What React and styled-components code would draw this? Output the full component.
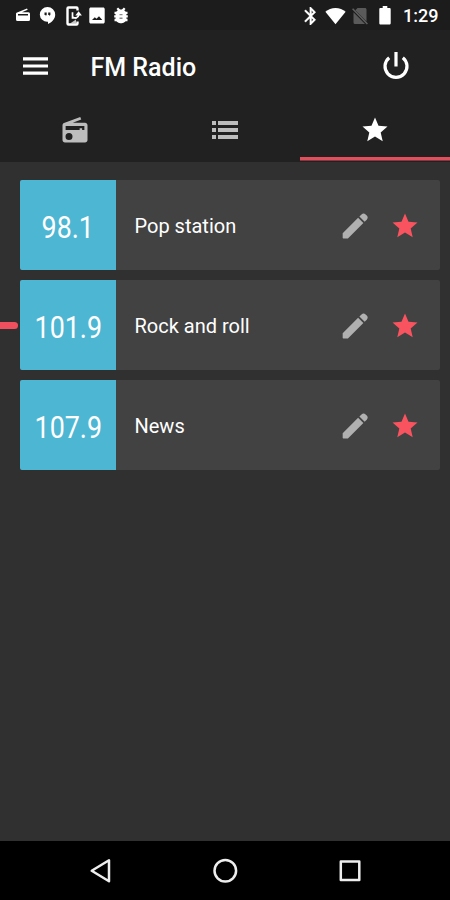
import React from "react";
import styled, { createGlobalStyle } from "styled-components";

const GlobalStyle = createGlobalStyle`
  * { box-sizing: border-box; }
  body { margin: 0; background: #303030; font-family: Roboto, "Noto Sans", sans-serif; }
`;

const Screen = styled.div`
  display: flex;
  flex-direction: column;
  width: 450px;
  height: 900px;
  background: #303030;
  color: #fff;
  overflow: hidden;
`;

const StatusBar = styled.header`
  display: flex;
  justify-content: space-between;
  align-items: center;
  height: 30px;
  padding: 1px 12px 0 15px;
  background: #1c1c1c;
`;

const StatusGroup = styled.div`
  display: flex;
  align-items: center;
`;

const StatusIcon = styled.span`
  display: flex;
  margin-left: ${(p) => p.$before || 0}px;
`;

const Clock = styled.span`
  width: 35px;
  margin-left: 12px;
  font-size: 18px;
  font-weight: 500;
  line-height: 28px;
  white-space: nowrap;
`;

const AppBar = styled.div`
  display: flex;
  align-items: center;
  height: 72px;
  padding: 0 37.5px 0 19px;
  background: #212121;
`;

const IconButton = styled.button`
  display: flex;
  align-items: center;
  justify-content: center;
  width: ${(p) => p.$size}px;
  height: ${(p) => p.$size}px;
  padding: 0;
  border: 0;
  background: none;
  color: ${(p) => p.$color || "#fff"};
`;

const Title = styled.h1`
  flex: 1;
  margin: 0 0 0 38.5px;
  padding-top: 3px;
  font-size: 25px;
  font-weight: 500;
  line-height: 32px;
`;

const Tabs = styled.nav`
  display: grid;
  grid-template-columns: repeat(3, 1fr);
  height: 60px;
  background: #212121;
`;

const Tab = styled.div`
  display: flex;
  align-items: center;
  justify-content: center;
  padding-bottom: 4px;
  color: ${(p) => (p.$active ? "#fff" : "#bdbdbd")};
  background: linear-gradient(#e24f5c, #e24f5c) 0 55px / 100% ${(p) => (p.$active ? "3.5px" : "0")} no-repeat;
`;

const StationList = styled.main`
  flex: 1;
  display: flex;
  flex-direction: column;
  gap: 10px;
  padding: 18px 10px 0 0;
`;

const StationRow = styled.div`
  display: flex;
  align-items: center;
  height: 90px;
`;

const TunedMark = styled.div`
  width: 18px;
  height: 7px;
  margin-right: 2px;
  border-radius: 0 4px 4px 0;
  background: ${(p) => (p.$on ? "#f0505e" : "transparent")};
`;

const Card = styled.section`
  flex: 1;
  display: flex;
  align-items: center;
  height: 90.5px;
  padding-right: 20px;
  border-radius: 2px;
  overflow: hidden;
  background: #424242;
`;

const Frequency = styled.div`
  display: flex;
  align-items: center;
  justify-content: center;
  width: 96px;
  height: 100%;
  padding-top: 4px;
  background: #4db6d3;
  font-size: 30.5px;
`;

const Condensed = styled.span`
  transform: scaleX(0.88);
`;

const StationName = styled.div`
  flex: 1;
  padding: 2px 0 0 18.5px;
  font-size: 20px;
`;

const Actions = styled.div`
  display: flex;
  align-items: center;
  gap: 18px;
  padding-top: 1px;
`;

const NavBar = styled.footer`
  display: flex;
  align-items: center;
  justify-content: space-between;
  height: 59px;
  padding: 0 85px 0 85px;
  background: #000;
`;

const Svg = ({ size, w, h, box = "0 0 24 24", children }) => (
  <svg width={w || size} height={h || size} viewBox={box} fill="currentColor" display="block">
    {children}
  </svg>
);

const STAR = "M12 17.27 18.18 21l-1.64-7.03L22 9.24l-7.19-.61L12 2 9.19 8.63 2 9.24l5.46 4.73L5.82 21z";

const Star = () => <Svg size={30}><path d={STAR} /></Svg>;

const Pencil = () => (
  <Svg size={34}>
    <path d="M3.3 17.2v3.1c0 .3.2.5.5.5H7L17.9 9.900 14.200 6.200zM20.300 7.500c.9-.9.900-2 0-2.900l-.8-.8c-.9-.9-2-.9-2.900 0L15.100 5.300l3.700 3.700z" />
  </Svg>
);

const RadioIcon = () => (
  <Svg size={30}>
    <path fillRule="evenodd" d="M3.200 6.400C2.500 6.700 2 7.400 2 8.300V20c0 1.100.9 2 2 2h16c1.100 0 2-.9 2-2V8.200c0-1.100-.9-2-2-2H10.200L17 3.500 16.200 1.600zM7.200 14.400a2.800 2.800 0 1 1 0 5.600 2.800 2.800 0 0 1 0-5.600zM4.500 8.700h15v3.200h-1.800v-1.300h-2v1.300H4.500z" />
  </Svg>
);

const ListIcon = () => (
  <Svg w={26} h={20} box="0 0 26 20">
    <path d="M0 1h4v4H0zM6 1h20v4H6zM0 8h4v4H0zM6 8h20v4H6zM0 15h4v4H0zM6 15h20v4H6z" />
  </Svg>
);

const MenuIcon = () => (
  <Svg w={33} h={33} box="0 0 33 33">
    <path d="M4 7.300h25v3.200H4zM4 14.400h25v3.200H4zM4 21.500h25v3.200H4z" />
  </Svg>
);

const PowerIcon = () => (
  <Svg size={34} box="0 0 34 34">
    <path d="M17 3v14.500M10.2 8.700a11 11 0 1 0 13.6 0" fill="none" stroke="currentColor" strokeWidth="3.2" />
  </Svg>
);

const SmallRadio = () => (
  <Svg w={16} h={16} box="0 0 16 16">
    <path fillRule="evenodd" d="M1.500 4.700 12 .5l.7 1.300L7 4.300h6.500A1.500 1.500 0 0 1 15 5.800V11.500a1.500 1.500 0 0 1-1.500 1.500h-11A1.500 1.500 0 0 1 1 11.500V5.800c0-.5.2-.8.500-1.100zM3 6.100v1.500h10V6.100z" />
  </Svg>
);

const Hangouts = () => (
  <Svg w={17} h={19} box="0 0 17 19">
    <path fillRule="evenodd" d="M8.500 1a7.700 7.700 0 0 1 7.700 7.700c0 4.200-3.400 7.400-7.200 9.300v-2.300h-.5a7.400 7.400 0 0 1-7.700-7A7.700 7.700 0 0 1 8.500 1zM5.500 6.500v2.500h1.200v1.300l1-1.500V6.500zm3.700 0v2.500h1.200v1.300l1-1.500V6.500z" />
  </Svg>
);

const PhoneSync = () => (
  <Svg w={17} h={20} box="0 0 17 20">
    <path d="M12.500 4.500V2.500c0-.7-.3-1-1-1h-8c-.7 0-1 .3-1 1v15c0 .7.300 1 1 1h8c.7 0 1-.3 1-1v-2" fill="none" stroke="currentColor" strokeWidth="2.400" />
    <path d="m5 17.500 6-4v4z" opacity=".75" />
    <path d="M7.500 6.300v5.500H12M8 11.200a3.500 3.500 0 0 0 5.700-2.300" fill="none" stroke="currentColor" strokeWidth="1.700" />
    <path d="M10.300 9.400 13.600 5.200l3.300 4.200z" />
  </Svg>
);

const Picture = () => (
  <Svg w={16} h={17} box="0 0 16 17">
    <path fillRule="evenodd" d="M1.800.5h12.400c.8 0 1.500.7 1.500 1.500v13c0 .8-.7 1.500-1.500 1.500H1.800C1 16.500.3 15.800.3 15V2C.3 1.200 1 .5 1.800.5zM3 13h10.300L10 9.200l-2.500 2.600L5.800 10.200z" />
  </Svg>
);

const Bug = () => (
  <Svg w={16} h={18} box="0 0 16 18">
    <rect x="2.600" y="2.600" width="10.800" height="13.600" rx="4.600" />
    <path d="m4.300 1.300 2.200 2.200M11.700 1.300 9.500 3.500M1.500 5.800h13M1.200 9.400h13.600M1.500 13h13" stroke="currentColor" strokeWidth="2.300" />
    <path d="M6.500 7.600h3M6.500 11.200h3" stroke="#8a8a8a" strokeWidth="1.400" />
  </Svg>
);

const Bluetooth = () => (
  <Svg w={12.5} h={18} box="5 2 13 20">
    <path d="M17.71 7.71 12 2h-1v7.59L6.41 5 5 6.41 10.59 12 5 17.59 6.41 19 11 14.41V22h1l5.71-5.71-4.3-4.29 4.3-4.29zM13 5.83l1.88 1.88L13 9.59V5.83zm1.88 10.46L13 18.17v-3.76l1.88 1.88z" stroke="currentColor" strokeWidth=".3" />
  </Svg>
);

const Wifi = () => (
  <Svg w={21} h={18} box="0 0 22 18">
    <path d="M11 17.600.4 4.500C3.200 2 7 .5 11 .5s7.800 1.500 10.600 4z" />
  </Svg>
);

const NoSim = () => (
  <Svg w={16} h={18} box="0 0 16 18">
    <path d="M5.500 1H13c.8 0 1.500.7 1.500 1.500v12L3.300 3.200zM1.500 5.200 13 17H3a1.500 1.500 0 0 1-1.500-1.500z" fill="#5a5a5a" />
    <path d="M.6 1.800 15.400 17" stroke="#606060" strokeWidth="1.500" />
  </Svg>
);

const Battery = () => (
  <Svg w={12} h={19} box="0 0 12 19">
    <path d="M3.700 0h4.600v2H10.500c.7 0 1.200.5 1.200 1.200v14c0 .8-.6 1.300-1.300 1.300H1.600c-.7 0-1.300-.5-1.300-1.300v-14C.3 2.500.8 2 1.500 2h2.200z" />
  </Svg>
);

const NavShape = ({ children }) => (
  <svg width="30" height="30" viewBox="0 0 30 30" fill="none" stroke="#eee" strokeWidth="2.500" strokeLinejoin="round">
    {children}
  </svg>
);

const stations = [
  { frequency: "98.1", name: "Pop station" },
  { frequency: "101.9", name: "Rock and roll", tuned: true },
  { frequency: "107.9", name: "News" },
];

export default function App() {
  return (
    <Screen>
      <GlobalStyle />
      <StatusBar>
        <StatusGroup>
          <StatusIcon><SmallRadio /></StatusIcon>
          <StatusIcon $before={7.5}><Hangouts /></StatusIcon>
          <StatusIcon $before={9}><PhoneSync /></StatusIcon>
          <StatusIcon $before={7}><Picture /></StatusIcon>
          <StatusIcon $before={8.5}><Bug /></StatusIcon>
        </StatusGroup>
        <StatusGroup>
          <StatusIcon><Bluetooth /></StatusIcon>
          <StatusIcon $before={8}><Wifi /></StatusIcon>
          <StatusIcon $before={6}><NoSim /></StatusIcon>
          <StatusIcon $before={11.5}><Battery /></StatusIcon>
          <Clock>1:29</Clock>
        </StatusGroup>
      </StatusBar>
      <AppBar>
        <IconButton $size={33} aria-label="Menu"><MenuIcon /></IconButton>
        <Title>FM Radio</Title>
        <IconButton $size={34} aria-label="Power"><PowerIcon /></IconButton>
      </AppBar>
      <Tabs>
        <Tab><RadioIcon /></Tab>
        <Tab><ListIcon /></Tab>
        <Tab $active><Star /></Tab>
      </Tabs>
      <StationList>
        {stations.map((s) => (
          <StationRow key={s.frequency}>
            <TunedMark $on={s.tuned} />
            <Card>
              <Frequency><Condensed>{s.frequency}</Condensed></Frequency>
              <StationName>{s.name}</StationName>
              <Actions>
                <IconButton $size={34} $color="#b0b0b0" aria-label="Rename"><Pencil /></IconButton>
                <IconButton $size={30} $color="#f8535f" aria-label="Favorite"><Star /></IconButton>
              </Actions>
            </Card>
          </StationRow>
        ))}
      </StationList>
      <NavBar>
        <NavShape><path d="M6.700 14.800 24 4.300v21z" /></NavShape>
        <NavShape><circle cx="15.300" cy="14.800" r="10.800" /></NavShape>
        <NavShape><path d="M5.800 5.500h18.500v18.500H5.800z" /></NavShape>
      </NavBar>
    </Screen>
  );
}
